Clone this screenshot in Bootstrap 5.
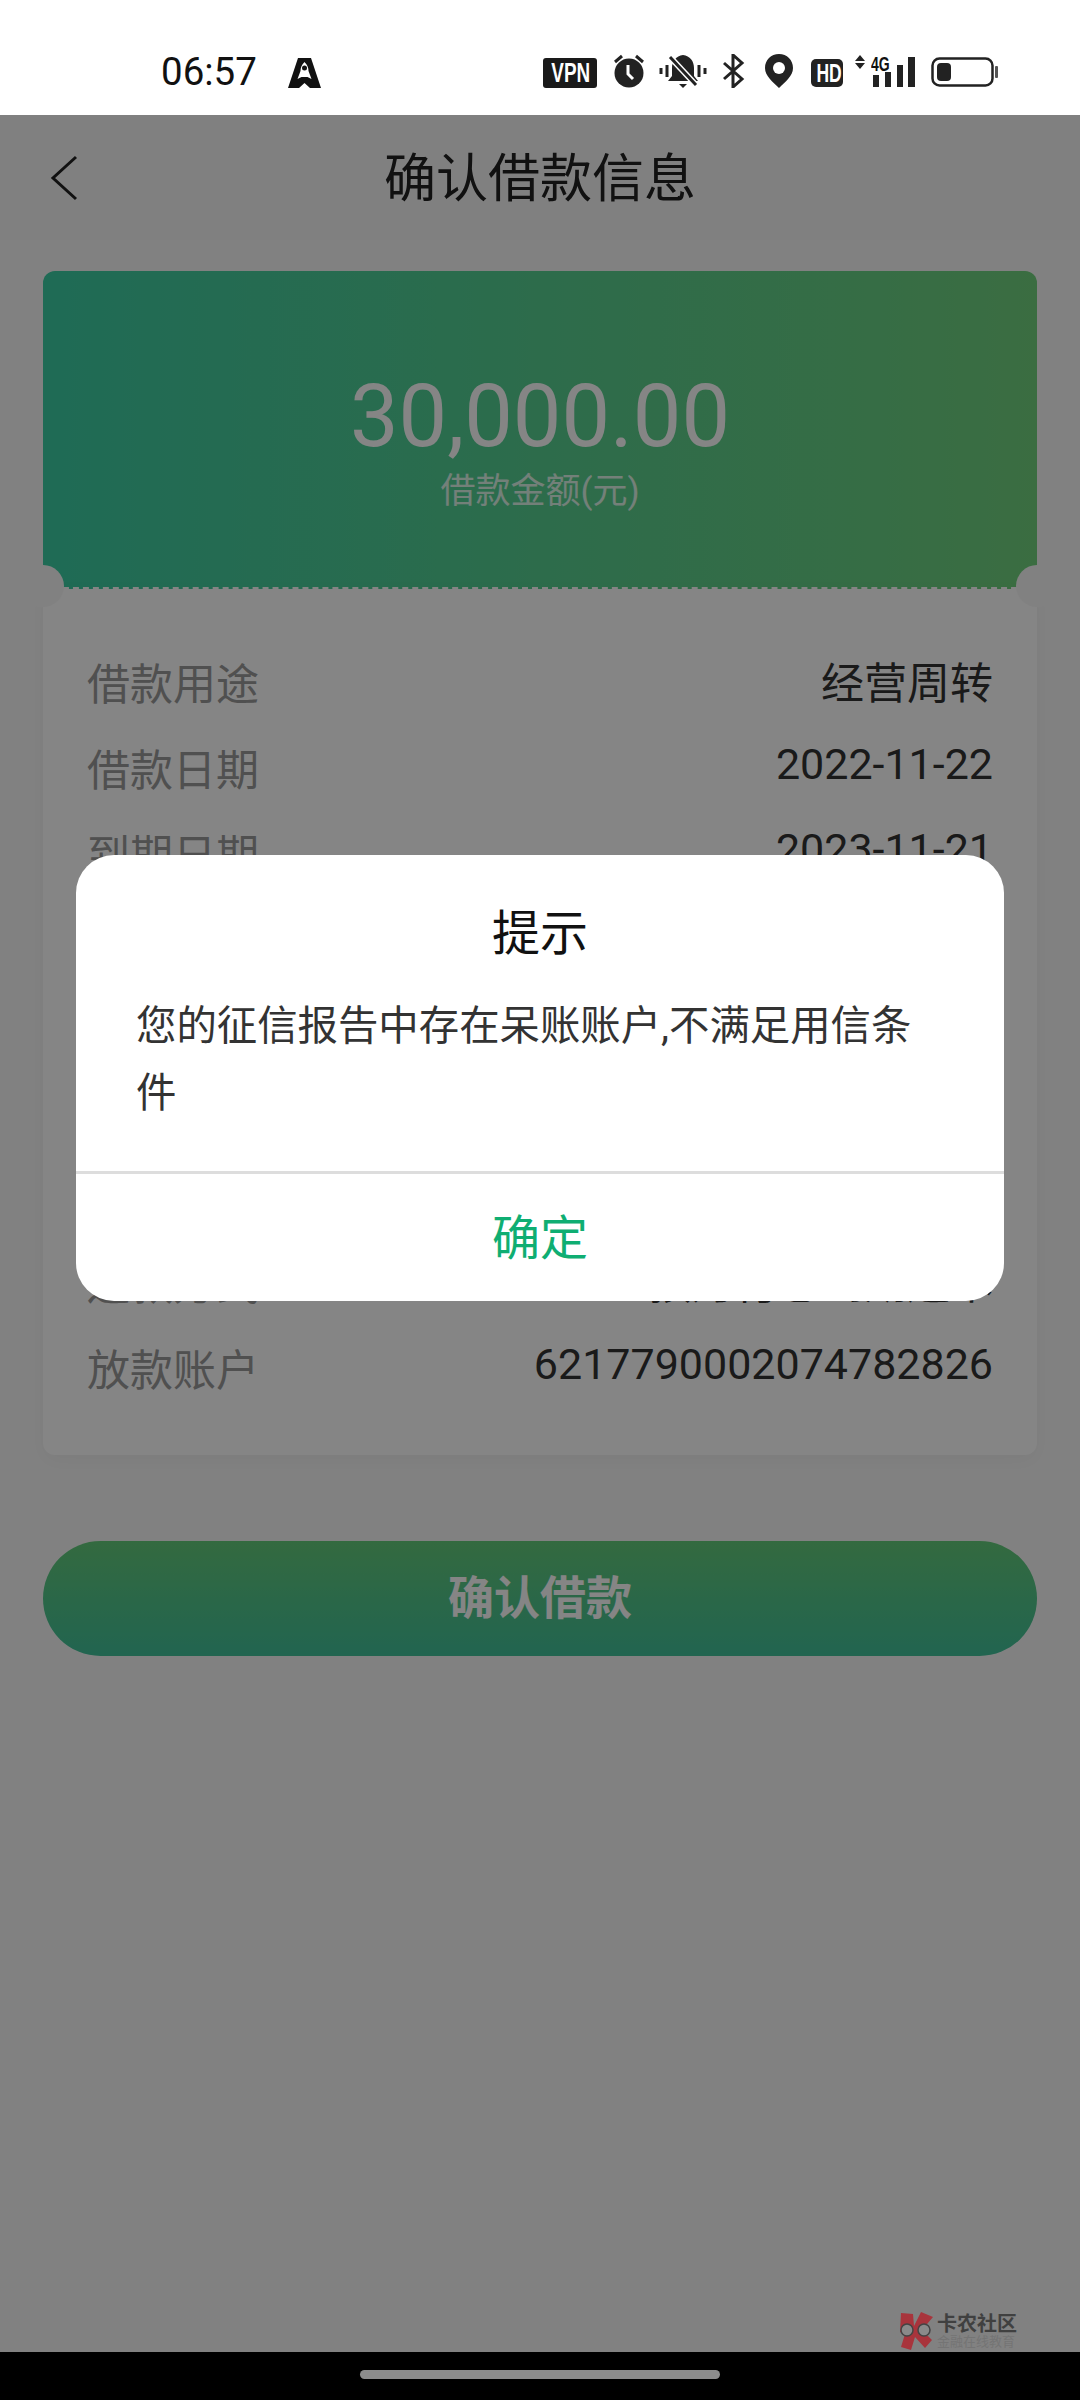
<!DOCTYPE html>
<html lang="zh">
<head>
    <meta charset="UTF-8">
    <title>确认借款信息</title>
    <link href="https://cdn.jsdelivr.net/npm/bootstrap@5.3.0/dist/css/bootstrap.min.css" rel="stylesheet">
    <style>
        body { margin: 0; background: #000; font-family: Roboto, "Noto Sans CJK SC", sans-serif; }
        .phone { width: 1080px; height: 2400px; overflow: hidden; }
        .status-bar { height: 115px; background: #fff; padding: 54px 82px 0 161px; color: #111; flex: none; }
        .status-time { font-size: 38.5px; line-height: 36px; width: 127px; }
        .st-vpn { width: 54px; height: 30px; background: #1a1a1a; color: #fff; border-radius: 3px; text-align: center; }
        .st-hd { width: 32px; height: 28px; margin-top: 5px; background: #222; color: #fff; border-radius: 5px; text-align: center; }
        .st-narrow { display: inline-block; font-family: "Liberation Sans", sans-serif; font-weight: 700; transform: scaleX(.7); transform-origin: center; white-space: nowrap; }
        .st-vpn .st-narrow { font-size: 27px; line-height: 30px; }
        .st-hd .st-narrow { font-size: 25px; line-height: 28px; }
        .st-gap-16 { margin-left: 16px; }
        .st-gap-14 { margin-left: 14px; }
        .st-gap-15 { margin-left: 15px; }
        .st-gap-20 { margin-left: 20px; }
        .st-gap-18 { margin-left: 18px; }
        .st-gap-12 { margin-left: 12px; }
        .st-signal { width: 62px; height: 34px; margin-top: 1px; }
        .st-4g { left: 12px; top: 0; font-size: 20px; line-height: 18px; }

        .app-screen { background: #f8f8f8; }
        .app-nav { height: 125px; background: #f6f6f6; padding-left: 50px; }
        .app-nav-title { left: 0; right: 0; top: 2px; font-size: 52px; line-height: 125px; text-align: center; color: #222; }
        .ticket { margin: 31px 43px 0; }
        .ticket-head { height: 318px; padding-top: 96px; border-radius: 12px 12px 0 0; background: linear-gradient(90deg, #3ccda4, #71d27e); color: #fff; border-bottom: 2px dashed #fff; }
        .ticket-amount { font-size: 86.5px; line-height: 100px; }
        .ticket-sub { font-size: 35px; line-height: 46px; opacity: .8; margin-top: 2px; }
        .ticket-notch { width: 42px; height: 42px; border-radius: 50%; background: #f8f8f8; top: 294px; }
        .notch-l { left: -21px; }
        .notch-r { right: -21px; }
        .ticket-body { height: 866px; padding: 53px 44px 0 44px; background: #fff; border-radius: 0 0 12px 12px; box-shadow: 0 6px 20px rgba(0,0,0,.04); }
        .ticket-row { height: 85.7px; font-size: 43px; line-height: 84px; color: #333; }
        .ticket-row span:first-child { color: #999; margin-top: 1px; }
        .ticket-row .num-val { margin-top: -6px; }
        .pay-btn { margin: 86px 43px 0; height: 115px; border-radius: 58px; background: linear-gradient(180deg, #63cb7a, #41c19a); color: #fff; font-size: 46px; font-weight: 700; line-height: 115px; }

        .dim-layer { inset: 0; background: rgba(0,0,0,.48); padding: 740px 76px 0; }
        .tip-box { height: 446px; border: 0; border-radius: 38px; background: #fff; }
        .tip-title { font-size: 48px; line-height: 60px; padding-top: 49px; color: #111; }
        .tip-text { height: 205px; margin-top: 29px; padding: 0 70px 0 60px; font-size: 40.4px; line-height: 67px; color: #333; }
        .tip-ok { height: 130px; border-top: 3px solid #ddd; font-size: 48px; line-height: 130px; color: #0fae72; }

        .nav-bar { height: 48px; background: #000; flex: none; }
        .nav-handle { width: 360px; height: 9px; border-radius: 5px; background: #8c8c8c; margin-top: 18px; }
        .mark-wrap { right: 63px; bottom: 2px; color: #404040; gap: 2px; }
        .mark-name { font-size: 20px; font-weight: 700; line-height: 22px; }
        .mark-sub { font-size: 13px; line-height: 14px; color: #747474; }
    </style>
</head>
<body>
<div class="phone d-flex flex-column">

    <div class="status-bar d-flex justify-content-between">
        <div class="d-flex">
            <div class="status-time">06:57</div>
            <svg width="33" height="30" viewBox="0 0 33 30" class="mt-1"><path d="M10 0h13l10 30H22l-5.500-5-5.500 5H0z" fill="#111"/><path d="M16.500 4c3 3 4 6 4 9l3 8-4-2h-6l-4 2 3-8c0-3 1-6 4-9z" fill="#fff"/><circle cx="16.500" cy="10" r="2.500" fill="#111"/></svg>
        </div>
        <div class="d-flex align-items-start">
            <div class="st-vpn mt-1"><span class="st-narrow">VPN</span></div>
            <svg class="st-gap-16" width="32" height="34" viewBox="0 0 32 34"><circle cx="16" cy="19" r="14.500" fill="#222"/><path d="M2 8l7-6M30 8l-7-6" stroke="#222" stroke-width="3"/><path d="M15 11v9l5 5" fill="none" stroke="#fff" stroke-width="3"/></svg>
            <svg class="st-gap-14" width="48" height="34" viewBox="0 0 48 34"><path d="M24 1c7 1 11 6 11 13v8l4 5H9l4-5v-8c0-7 4-12 11-13z" fill="#222"/><path d="M20 30h8l-4 4z" fill="#222"/><path d="M11 3l26 28" stroke="#fff" stroke-width="6"/><path d="M11 3l26 28" stroke="#222" stroke-width="3"/><path d="M2 14v6M8 11v12M40 11v12M46 14v6" stroke="#222" stroke-width="3"/></svg>
            <svg class="st-gap-15" width="23" height="34" viewBox="0 0 23 34"><path d="M2 9l18 16-9 8V1l9 8L2 25" fill="none" stroke="#222" stroke-width="3"/></svg>
            <svg class="st-gap-20" width="28" height="34" viewBox="0 0 28 34"><path d="M14 0C6 0 0 6 0 14c0 8 8 14 14 20 6-6 14-12 14-20C28 6 22 0 14 0z" fill="#222"/><circle cx="14" cy="14" r="6" fill="#fff"/></svg>
            <div class="st-hd st-gap-18"><span class="st-narrow">HD</span></div>
            <div class="st-signal st-gap-12 position-relative">
                <svg width="62" height="34" viewBox="0 0 62 34" class="d-block"><path d="M0 6l5-6 5 6zM0 8h10l-5 6z" fill="#222"/><path d="M18 20h6v12h-6zM30 17h6v15h-6zM42 10h6v22h-6zM53 2h7v30h-7z" fill="#222"/></svg>
                <span class="st-4g st-narrow position-absolute">4G</span>
            </div>
            <svg class="st-gap-14" width="67" height="34" viewBox="0 0 67 34"><rect x="1.500" y="4.500" width="60" height="27" rx="7" fill="none" stroke="#222" stroke-width="2.500"/><rect x="6" y="9" width="14" height="18" rx="4" fill="#222"/><rect x="64" y="12" width="3" height="12" rx="1" fill="#555"/></svg>
        </div>
    </div>

    <div class="app-screen flex-grow-1 position-relative">
        <div class="app-nav position-relative d-flex align-items-center">
            <svg width="28" height="46" viewBox="0 0 28 46"><path d="M26 2L3 23l23 21" fill="none" stroke="#222" stroke-width="3"/></svg>
            <div class="app-nav-title position-absolute">确认借款信息</div>
        </div>

        <div class="ticket position-relative">
            <div class="ticket-head text-center">
                <div class="ticket-amount">30,000.00</div>
                <div class="ticket-sub">借款金额(元)</div>
            </div>
            <div class="ticket-notch notch-l position-absolute"></div>
            <div class="ticket-notch notch-r position-absolute"></div>
            <div class="ticket-body">
                <div class="ticket-row d-flex justify-content-between"><span>借款用途</span><span>经营周转</span></div>
                <div class="ticket-row d-flex justify-content-between"><span>借款日期</span><span class="num-val">2022-11-22</span></div>
                <div class="ticket-row d-flex justify-content-between"><span>到期日期</span><span class="num-val">2023-11-21</span></div>
                <div class="ticket-row d-flex justify-content-between"><span>借款期限</span><span>12个月</span></div>
                <div class="ticket-row d-flex justify-content-between"><span>年化利率</span><span>7.20%</span></div>
                <div class="ticket-row d-flex justify-content-between"><span>还款日期</span><span>每月21日</span></div>
                <div class="ticket-row d-flex justify-content-between"><span>担保方式</span><span>信用</span></div>
                <div class="ticket-row d-flex justify-content-between"><span>还款方式</span><span>按月付息到期还本</span></div>
                <div class="ticket-row d-flex justify-content-between"><span>放款账户</span><span class="num-val">6217790002074782826</span></div>
            </div>
        </div>

        <div class="pay-btn text-center">确认借款</div>

        <div class="dim-layer position-absolute">
            <div class="tip-box modal-content overflow-hidden text-center">
                <div class="tip-title">提示</div>
                <div class="tip-text text-start">您的征信报告中存在呆账账户,不满足用信条件</div>
                <div class="tip-ok">确定</div>
            </div>
        </div>

        <div class="mark-wrap position-absolute d-flex align-items-center">
            <svg width="38" height="38" viewBox="0 0 38 38"><path d="M4 1l12 1 1 12 7-14 12 5-11 13 10 10-7 8-10-11-4 13-10-3 4-13-5-2z" fill="#a8343c"/><circle cx="10" cy="18" r="6" fill="#8a8a8a" stroke="#444" stroke-width="1.500"/><circle cx="27" cy="18" r="6" fill="#8a8a8a" stroke="#444" stroke-width="1.500"/></svg>
            <div>
                <div class="mark-name">卡农社区</div>
                <div class="mark-sub">金融在线教育</div>
            </div>
        </div>
    </div>

    <div class="nav-bar d-flex justify-content-center">
        <div class="nav-handle"></div>
    </div>
</div>
<script src="https://cdn.jsdelivr.net/npm/bootstrap@5.3.0/dist/js/bootstrap.bundle.min.js"></script>
</body>
</html>
